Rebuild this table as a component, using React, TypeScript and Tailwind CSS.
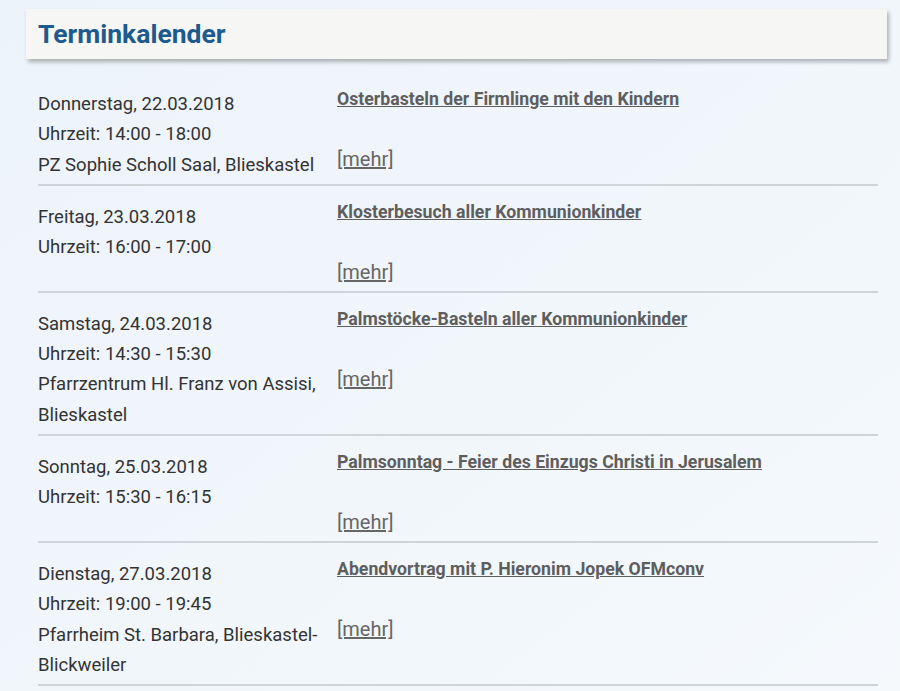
import React from 'react';

interface Termin {
  date: string;
  time: string;
  place?: string;
  title: string;
}

const termine: Termin[] = [
  {
    date: 'Donnerstag, 22.03.2018',
    time: 'Uhrzeit: 14:00 - 18:00',
    place: 'PZ Sophie Scholl Saal, Blieskastel',
    title: 'Osterbasteln der Firmlinge mit den Kindern',
  },
  {
    date: 'Freitag, 23.03.2018',
    time: 'Uhrzeit: 16:00 - 17:00',
    title: 'Klosterbesuch aller Kommunionkinder',
  },
  {
    date: 'Samstag, 24.03.2018',
    time: 'Uhrzeit: 14:30 - 15:30',
    place: 'Pfarrzentrum Hl. Franz von Assisi, Blieskastel',
    title: 'Palmstöcke-Basteln aller Kommunionkinder',
  },
  {
    date: 'Sonntag, 25.03.2018',
    time: 'Uhrzeit: 15:30 - 16:15',
    title: 'Palmsonntag - Feier des Einzugs Christi in Jerusalem',
  },
  {
    date: 'Dienstag, 27.03.2018',
    time: 'Uhrzeit: 19:00 - 19:45',
    place: 'Pfarrheim St. Barbara, Blieskastel-Blickweiler',
    title: 'Abendvortrag mit P. Hieronim Jopek OFMconv',
  },
];

export default function App() {
  return (
    <div className="min-h-[691px] w-[900px] bg-gradient-to-br from-[#ecf3fa] via-[#f1f6fb] to-[#f5f9fc] font-['Roboto',sans-serif] text-[#333]">
      <div className="pl-[26px] pr-[13px] pt-[9px]">
        <div className="h-[50px] bg-[#f6f6f4] pl-[12px] flex items-center shadow-[2px_3px_4px_rgba(0,0,0,0.28)]">
          <h1 className="text-[26.5px] font-bold text-[#1d5a8e] leading-none">
            Terminkalender
          </h1>
        </div>
      </div>

      <div className="pl-[38px] pr-[22px] pt-[14px]">
        {termine.map((t) => (
          <div
            key={t.date}
            className="flex border-b-2 border-[#cfd4d8] pt-[16px] pb-[4px]"
          >
            <div className="w-[299px] shrink-0 pr-[4px] text-[18.5px] leading-[30.3px]">
              <div>{t.date}</div>
              <div>{t.time}</div>
              {t.place && <div>{t.place}</div>}
            </div>
            <div className="flex-1">
              <a
                href="#"
                className="block text-[17.7px] leading-[20px] font-bold text-[#5e5e5e] underline"
              >
                {t.title}
              </a>
              <a
                href="#"
                className="inline-block mt-[35px] text-[20px] leading-[30px] text-[#666] underline"
              >
                [mehr]
              </a>
            </div>
          </div>
        ))}
      </div>
    </div>
  );
}
